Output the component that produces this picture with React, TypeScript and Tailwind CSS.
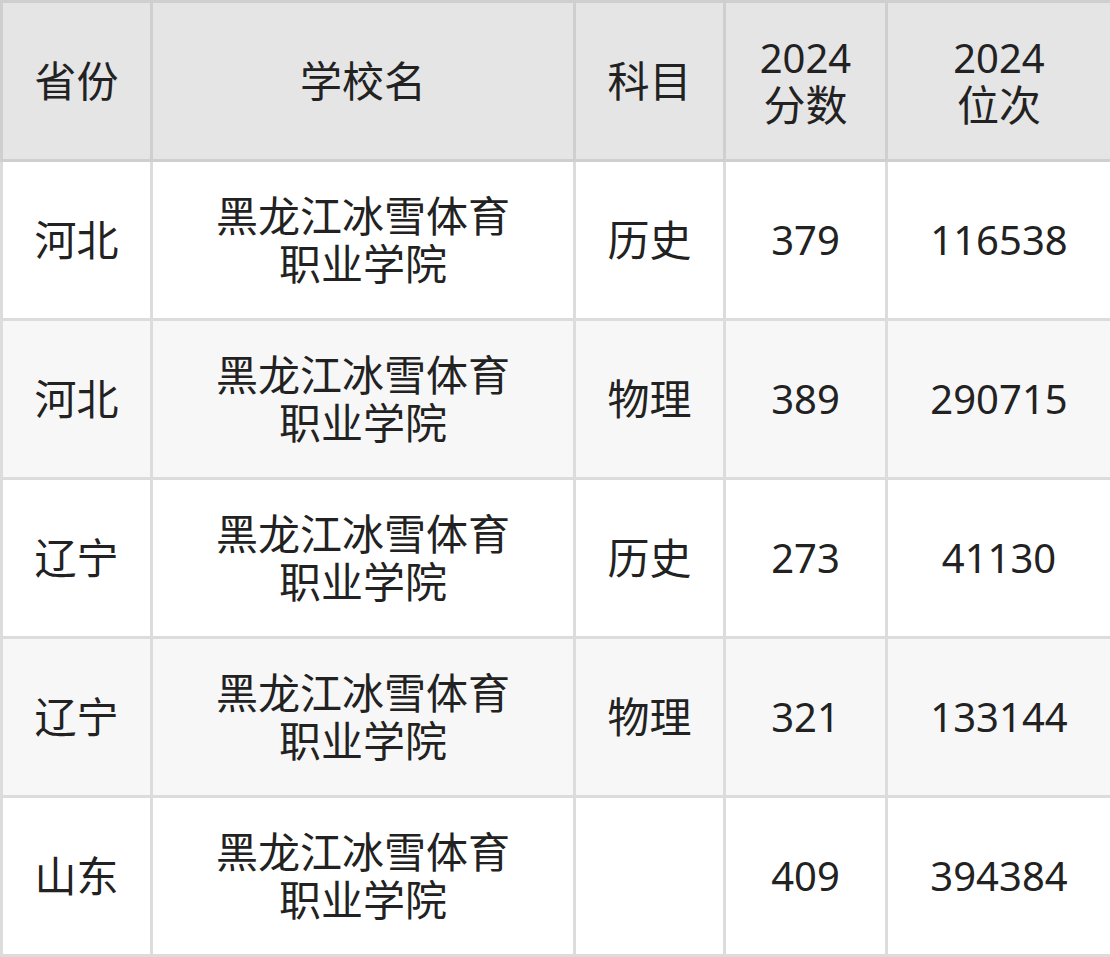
import React from "react";

const rows = [
  { p: "河北", s: "黑龙江冰雪体育职业学院", k: "历史", f: "379", r: "116538" },
  { p: "河北", s: "黑龙江冰雪体育职业学院", k: "物理", f: "389", r: "290715" },
  { p: "辽宁", s: "黑龙江冰雪体育职业学院", k: "历史", f: "273", r: "41130" },
  { p: "辽宁", s: "黑龙江冰雪体育职业学院", k: "物理", f: "321", r: "133144" },
  { p: "山东", s: "黑龙江冰雪体育职业学院", k: "", f: "409", r: "394384" },
];

export default function App() {
  const font = { fontFamily: '"Noto Sans", "Noto Sans CJK SC", sans-serif' };
  return (
    <div className="w-[1110px] h-[957px] bg-white overflow-hidden" style={font}>
      <table className="w-[1110px] table-fixed border-collapse text-[42px] leading-[48px] text-[#222222]">
        <colgroup>
          <col className="w-[150px]" />
          <col className="w-[423px]" />
          <col className="w-[150px]" />
          <col className="w-[162px]" />
          <col className="w-[225px]" />
        </colgroup>
        <thead>
          <tr className="h-[159px] bg-[#e5e5e5]">
            <th className="border-[3px] border-[#cfcfcf] font-normal text-center">省份</th>
            <th className="border-[3px] border-[#cfcfcf] font-normal text-center">学校名</th>
            <th className="border-[3px] border-[#cfcfcf] font-normal text-center">科目</th>
            <th className="border-[3px] border-[#cfcfcf] font-normal text-center">
              <div className="text-[40px] leading-[47px]">2024</div>
              <div className="leading-[47px]">分数</div>
            </th>
            <th className="border-[3px] border-[#cfcfcf] font-normal text-center">
              <div className="text-[40px] leading-[47px]">2024</div>
              <div className="leading-[47px]">位次</div>
            </th>
          </tr>
        </thead>
        <tbody>
          {rows.map((row, i) => (
            <tr key={i} className={(i % 2 === 1 ? "bg-[#f7f7f7] " : "bg-white ") + "h-[159px]"}>
              <td className="border-[3px] border-[#dcdcdc] text-center">{row.p}</td>
              <td className="border-[3px] border-[#dcdcdc] text-center px-[55px]">{row.s}</td>
              <td className="border-[3px] border-[#dcdcdc] text-center">{row.k}</td>
              <td className="border-[3px] border-[#dcdcdc] text-center text-[40px]">{row.f}</td>
              <td className="border-[3px] border-[#dcdcdc] text-center text-[40px]">{row.r}</td>
            </tr>
          ))}
        </tbody>
      </table>
    </div>
  );
}
